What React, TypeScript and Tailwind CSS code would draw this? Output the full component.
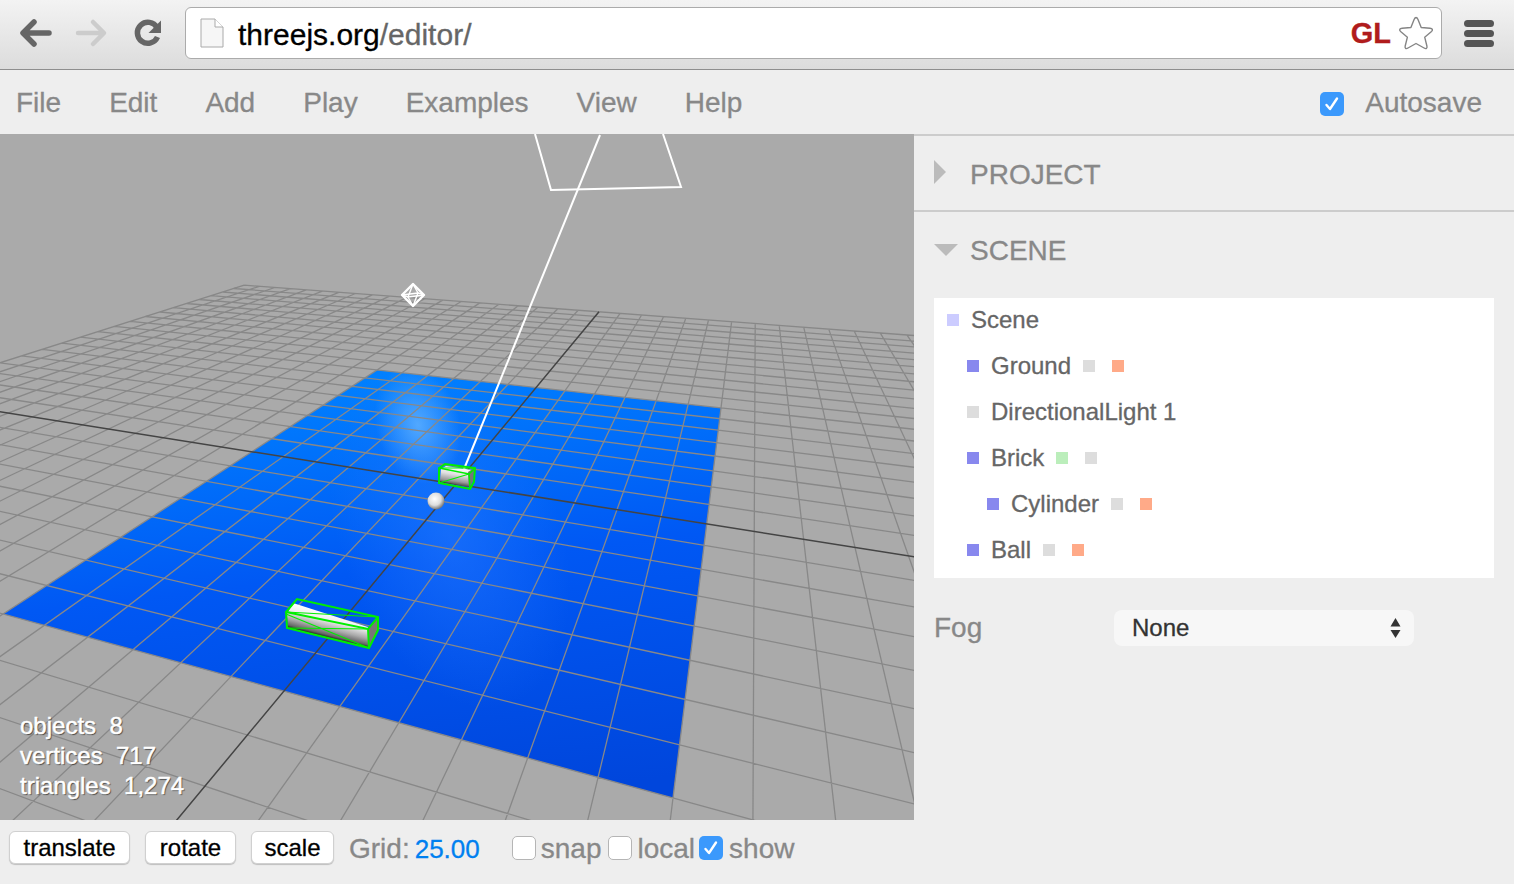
// threejs.org/editor inside a Chrome window
const quad = { tl: [377, 370], tr: [721, 408], br: [673, 798], bl: [3, 614] }

function makeHomography() {
  const [x0, y0] = quad.tl
  const [x1, y1] = quad.tr
  const [x2, y2] = quad.br
  const [x3, y3] = quad.bl
  const dx1 = x1 - x2
  const dx2 = x3 - x2
  const sx = x0 - x1 + x2 - x3
  const dy1 = y1 - y2
  const dy2 = y3 - y2
  const sy = y0 - y1 + y2 - y3
  const den = dx1 * dy2 - dx2 * dy1
  const g = (sx * dy2 - dx2 * sy) / den
  const h = (dx1 * sy - sx * dy1) / den
  return { a: x1 - x0 + g * x1, b: x3 - x0 + h * x3, c: x0, d: y1 - y0 + g * y1, e: y3 - y0 + h * y3, f: y0, g, h }
}

const H = makeHomography()

// homogeneous point for grid cell coordinates, the ground plane is 12 x 16 cells
function hom(u: number, v: number) {
  const s = (u + 6) / 12
  const t = (v + 8) / 16
  return [H.a * s + H.b * t + H.c, H.d * s + H.e * t + H.f, H.g * s + H.h * t + 1]
}

function gridLine(u0: number, v0: number, u1: number, v1: number) {
  let p = hom(u0, v0)
  let q = hom(u1, v1)
  const eps = 0.02
  if (p[2] < eps && q[2] < eps) return ''
  if (p[2] < eps || q[2] < eps) {
    const k = (eps - p[2]) / (q[2] - p[2])
    const m = [p[0] + (q[0] - p[0]) * k, p[1] + (q[1] - p[1]) * k, eps]
    if (p[2] < eps) p = m
    else q = m
  }
  return `M${(p[0] / p[2]).toFixed(1)} ${(p[1] / p[2] - 134).toFixed(1)}L${(q[0] / q[2]).toFixed(1)} ${(q[1] / q[2] - 134).toFixed(1)}`
}

const cells = Array.from({ length: 41 }, (_, i) => i - 20)
const gridPath = cells
  .filter((n) => n !== 0)
  .map((n) => gridLine(n, -20, n, 20) + gridLine(-20, n, 20, n))
  .join('')
const axisPath = gridLine(0, -20, 0, 20) + gridLine(-20, 0, 20, 0)
const planePoints = [quad.tl, quad.tr, quad.br, quad.bl].map(([x, y]) => `${x},${y - 134}`).join(' ')

function Viewport() {
  return (
    <svg className="absolute inset-0 h-full w-full" viewBox="0 0 914 686">
      <defs>
        <linearGradient id="plane" gradientUnits="userSpaceOnUse" x1="420" y1="236" x2="470" y2="666">
          <stop offset="0" stopColor="#0080ff" />
          <stop offset="0.45" stopColor="#0058f4" />
          <stop offset="1" stopColor="#0046dc" />
        </linearGradient>
        <radialGradient id="spot" gradientUnits="userSpaceOnUse" cx="0" cy="0" r="1" gradientTransform="translate(418 291) rotate(75) scale(60 42)">
          <stop offset="0" stopColor="#5aaeff" stopOpacity="0.9" />
          <stop offset="1" stopColor="#5aaeff" stopOpacity="0" />
        </radialGradient>
        <radialGradient id="spot2" gradientUnits="userSpaceOnUse" cx="0" cy="0" r="1" gradientTransform="translate(450 401) rotate(70) scale(180 110)">
          <stop offset="0" stopColor="#2a7bff" stopOpacity="0.5" />
          <stop offset="1" stopColor="#2a7bff" stopOpacity="0" />
        </radialGradient>
        <radialGradient id="ball" cx="0.42" cy="0.38" r="0.62">
          <stop offset="0" stopColor="#ffffff" />
          <stop offset="0.6" stopColor="#dddddd" />
          <stop offset="1" stopColor="#777777" />
        </radialGradient>
        <linearGradient id="cyl" gradientUnits="userSpaceOnUse" x1="336" y1="480" x2="330" y2="504">
          <stop offset="0" stopColor="#ffffff" />
          <stop offset="0.3" stopColor="#f0f0f0" />
          <stop offset="0.65" stopColor="#aaaaaa" />
          <stop offset="0.9" stopColor="#666666" />
          <stop offset="1" stopColor="#222222" />
        </linearGradient>
        <linearGradient id="cylSmall" gradientUnits="userSpaceOnUse" x1="458" y1="333" x2="455" y2="352">
          <stop offset="0" stopColor="#ffffff" />
          <stop offset="0.4" stopColor="#e0e0e0" />
          <stop offset="0.75" stopColor="#999999" />
          <stop offset="1" stopColor="#333333" />
        </linearGradient>
      </defs>

      <polygon points={planePoints} fill="url(#plane)" />
      <polygon points={planePoints} fill="url(#spot2)" />
      <polygon points={planePoints} fill="url(#spot)" />
      <path d={gridPath} fill="none" stroke="#888888" strokeWidth="1.3" />
      <path d={axisPath} fill="none" stroke="#444444" strokeWidth="1.5" />

      {/* camera helper */}
      <g fill="none" stroke="#ffffff" strokeWidth="2">
        <path d="M535 0L551 56L681 53L663 0" />
        <path d="M600 1L462 340" />
      </g>

      {/* light helper */}
      <g fill="none" stroke="#ffffff" strokeWidth="2.4" strokeLinejoin="round">
        <path d="M413 150L424 161L413 172L402 161Z" />
        <path d="M413 150L408 163L413 172L418 159Z" strokeWidth="1.4" />
        <path d="M402 161L408 163L424 161L418 159Z" strokeWidth="1.4" />
      </g>

      {/* small cylinder */}
      <polygon points="441,335 446,332 472,336 472,347 468,353 440,347" fill="url(#cylSmall)" />
      <polygon points="468,338 474,334 473,347 469,354" fill="#777777" />
      <g fill="none" stroke="#00ee00" strokeWidth="2">
        <path d="M439 334L445 330L475 334L474 348L470 355L439 349Z" />
        <path d="M439 334L469 340L475 334M469 340L470 355" strokeWidth="1.500" />
        <path d="M439 334L475 334M439 349L469 340" strokeWidth="1.200" />
      </g>

      {/* large cylinder */}
      <polygon points="293,469 368,493 368,513 288,494 287,480" fill="url(#cyl)" />
      <polygon points="368,496 378,483 378,498 369,514" fill="#777777" />
      <g fill="none" stroke="#00ee00" strokeWidth="2">
        <path d="M286 478L297 465L378 483L378 496L369 514L287 494Z" />
        <path d="M286 478L368 495L378 483M368 495L369 514" />
        <path d="M286 478L378 483M286 480L369 514M287 494L368 495" strokeWidth="1.200" />
      </g>

      {/* ball */}
      <circle cx="436" cy="367" r="8.5" fill="url(#ball)" />
    </svg>
  )
}

function Checkbox({ checked }: { checked?: boolean }) {
  if (checked) {
    return (
      <span className="flex h-6 w-6 shrink-0 items-center justify-center rounded-[5px] bg-[#3b99fc]">
        <svg width="16" height="16" viewBox="0 0 16 16" fill="none" stroke="#ffffff" strokeWidth="2.4" strokeLinecap="round" strokeLinejoin="round">
          <path d="M2.500 9l3.500 4L13 2.500" />
        </svg>
      </span>
    )
  }
  return <span className="block h-6 w-6 shrink-0 rounded-[5px] border border-[#b5b5b5] bg-white" />
}

function ToolButton({ label, width }: { label: string; width: string }) {
  return (
    <button className={`h-[33px] rounded-[6px] border border-[#d0d0d0] bg-white text-[24px] leading-none text-black shadow-[0_1px_1px_rgba(0,0,0,0.2)] ${width}`}>
      {label}
    </button>
  )
}

type Row = { name: string; depth: number; icon: string; after: string[] }

const rows: Row[] = [
  { name: 'Scene', depth: 0, icon: 'bg-[#ccccff]', after: [] },
  { name: 'Ground', depth: 1, icon: 'bg-[#8888ee]', after: ['bg-[#dddddd]', 'bg-[#ffaa88]'] },
  { name: 'DirectionalLight 1', depth: 1, icon: 'bg-[#dddddd]', after: [] },
  { name: 'Brick', depth: 1, icon: 'bg-[#8888ee]', after: ['bg-[#bbeebb]', 'bg-[#dddddd]'] },
  { name: 'Cylinder', depth: 2, icon: 'bg-[#8888ee]', after: ['bg-[#dddddd]', 'bg-[#ffaa88]'] },
  { name: 'Ball', depth: 1, icon: 'bg-[#8888ee]', after: ['bg-[#dddddd]', 'bg-[#ffaa88]'] },
]

const depthPadding = ['pl-[13px]', 'pl-[33px]', 'pl-[53px]']

function Outliner() {
  return (
    <div className="mx-[20px] mt-[10px] flex h-[280px] flex-col gap-[2px] bg-white">
      {rows.map((row) => (
        <div key={row.name} className={`flex h-[44px] items-center text-[24px] text-[#666666] ${depthPadding[row.depth]}`}>
          <span className={`h-3 w-3 ${row.icon}`} />
          <span className="ml-3">{row.name}</span>
          {row.after.map((color, i) => (
            <span key={i} className={`h-3 w-3 ${i === 0 ? 'ml-3' : 'ml-[17px]'} ${color}`} />
          ))}
        </div>
      ))}
    </div>
  )
}

export default function App() {
  return (
    <div className="flex h-[884px] w-[1514px] flex-col overflow-hidden bg-[#eeeeee] font-['Liberation_Sans',sans-serif] text-[#888888] [-webkit-text-stroke:0.3px]">
      {/* Browser chrome */}
      <div className="flex h-[70px] shrink-0 items-center border-b border-[#8e8e8e] bg-gradient-to-b from-[#f3f3f3] to-[#dcdcdc] pb-[3px]">
        <div className="flex items-center">
          <svg className="ml-[18px]" width="36" height="32" viewBox="0 0 36 32" fill="none" stroke="#666666" strokeWidth="5.500" strokeLinecap="round" strokeLinejoin="round">
            <path d="M31 16H6M16 5L5 16l11 11" />
          </svg>
          <svg className="ml-[19px]" width="36" height="32" viewBox="0 0 36 32" fill="none" stroke="#cccccc" strokeWidth="4.500" strokeLinecap="round" strokeLinejoin="round">
            <path d="M5 16h25M20 5l11 11-11 11" />
          </svg>
          <svg className="ml-[23px]" width="32" height="32" viewBox="0 0 32 32">
            <path d="M25 10.500A10.500 10.500 0 1 0 25.500 20" fill="none" stroke="#666666" strokeWidth="5.500" />
            <path d="M29 3.500V16H16.500Z" fill="#666666" />
          </svg>
        </div>
        <div className="ml-[21px] flex h-[52px] w-[1257px] items-center rounded-[6px] border border-[#ababab] bg-white">
          <svg className="ml-[14px]" width="24" height="30" viewBox="0 0 24 30">
            <path d="M1 1h14l8 8v20H1Z" fill="#f6f6f6" stroke="#aaaaaa" />
            <path d="M15 1v8h8" fill="#ffffff" stroke="#aaaaaa" />
          </svg>
          <span className="ml-[14px] pt-[2px] text-[30px] text-black">
            threejs.org<span className="text-[#666666]">/editor/</span>
          </span>
          <span className="ml-auto text-[29px] leading-none font-bold text-[#b01c1c]">GL</span>
          <svg className="mr-[6px] ml-[6px]" width="38" height="36" viewBox="0 0 38 36" fill="#ffffff" stroke="#858585" strokeWidth="1.400" strokeLinejoin="round">
            <path d="M19 2.500c1 0 1.500.8 2 2l3.200 8 8.800.7c2.500.2 3.200 1.800 1.500 3.300l-6.800 5.700 2.200 8.800c.6 2.300-.8 3.300-2.800 2L19 28.500 11 33c-2 1.300-3.400.3-2.800-2l2.200-8.800-6.800-5.700c-1.700-1.500-1-3.100 1.500-3.300l8.800-.7 3.200-8c.5-1.200 1-2 2-2Z" />
          </svg>
        </div>
        <div className="ml-[22px] flex flex-col gap-[3px]">
          <span className="h-[7px] w-[30px] rounded-full bg-[#555555]" />
          <span className="h-[7px] w-[30px] rounded-full bg-[#555555]" />
          <span className="h-[7px] w-[30px] rounded-full bg-[#555555]" />
        </div>
      </div>

      {/* Editor menu */}
      <div className="flex h-[64px] shrink-0 items-center gap-[48px] pt-[2px] pl-[16px] text-[28px]">
        <span>File</span>
        <span>Edit</span>
        <span>Add</span>
        <span>Play</span>
        <span>Examples</span>
        <span>View</span>
        <span>Help</span>
        <div className="mr-[32px] ml-auto flex items-center gap-[21px]">
          <span className="mt-[2px]">
            <Checkbox checked />
          </span>
          <span>Autosave</span>
        </div>
      </div>

      <div className="flex min-h-0 flex-1">
        <div className="flex w-[914px] shrink-0 flex-col">
          <div className="relative h-[686px] shrink-0 overflow-hidden bg-[#aaaaaa]">
            <Viewport />
            <div className="absolute bottom-[19px] left-[20px] text-[24px] leading-[30px] whitespace-pre text-white [text-shadow:1px_1px_1px_rgba(0,0,0,0.6)] [-webkit-text-stroke:0.5px_#ffffff]">
              <div>objects  8</div>
              <div>vertices  717</div>
              <div>triangles  1,274</div>
            </div>
          </div>
          {/* Toolbar */}
          <div className="mt-[11px] flex h-[33px] items-center gap-[15px] pl-[9px] text-[28px]">
            <ToolButton label="translate" width="w-[121px]" />
            <ToolButton label="rotate" width="w-[91px]" />
            <ToolButton label="scale" width="w-[83px]" />
            <div className="flex items-baseline pt-[2px]">
              <span>Grid:</span>
              <span className="ml-[5px] text-[26px] text-[#0080f0]">25.00</span>
            </div>
            <div className="ml-[17px] flex items-center">
              <Checkbox />
              <span className="ml-[5px] pt-[2px]">snap</span>
              <span className="ml-[7px]">
                <Checkbox />
              </span>
              <span className="ml-[5px] pt-[2px]">local</span>
              <span className="ml-[4px]">
                <Checkbox checked />
              </span>
              <span className="ml-[6px] pt-[2px]">show</span>
            </div>
          </div>
        </div>

        {/* Sidebar */}
        <div className="flex-1 border-t-2 border-[#cccccc] text-[28px]">
          <div className="flex h-[76px] items-center border-b-2 border-[#cccccc] pl-[20px]">
            <svg className="mr-[24px] mb-[2px]" width="12" height="24" viewBox="0 0 12 24">
              <path d="M0 0l12 12L0 24Z" fill="#bbbbbb" />
            </svg>
            <span className="pt-[4px]">PROJECT</span>
          </div>
          <div className="flex h-[76px] items-center pl-[20px]">
            <svg className="mr-[12px]" width="24" height="12" viewBox="0 0 24 12">
              <path d="M0 0h24L12 12Z" fill="#bbbbbb" />
            </svg>
            <span className="pt-[2px]">SCENE</span>
          </div>
          <Outliner />
          <div className="mt-[32px] flex h-[36px] items-center pl-[20px]">
            <span className="w-[180px]">Fog</span>
            <div className="flex h-[36px] w-[300px] items-center justify-between rounded-[8px] bg-[#f7f7f7] pr-[13px] pl-[18px] text-[24px] text-[#333333]">
              <span>None</span>
              <svg width="11" height="22" viewBox="0 0 11 22" fill="#333333">
                <path d="M5.500 1L10.500 9.500H.5ZM5.500 21L.5 13H10.500Z" />
              </svg>
            </div>
          </div>
        </div>
      </div>
    </div>
  )
}
